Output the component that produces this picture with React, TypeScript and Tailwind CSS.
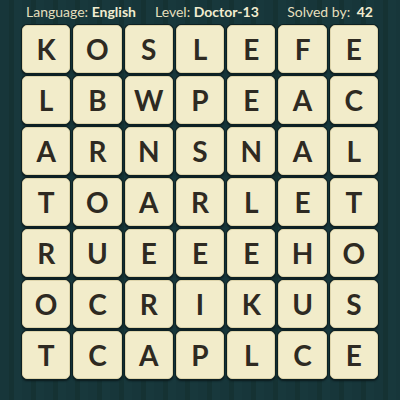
const rows = [
  "KOSLEFE",
  "LBWPEAC",
  "ARNSNAL",
  "TOARLET",
  "RUEEEHO",
  "OCRIKUS",
  "TCAPLCE",
];

export default function App() {
  return (
    <div className="w-[400px] h-[400px] overflow-hidden bg-[repeating-linear-gradient(90deg,#17363a_0px,#17363a_9px,#153233_9px,#153233_14px,#18383c_14px,#18383c_22px)] font-['Lato',sans-serif]">
      {/* Header */}
      <div className="flex items-center h-[23px] pl-[26px] pr-[27px] text-[14px] text-[#e4dfbd]">
        <div className="w-[129px]">
          Language: <span className="font-bold text-[#f1ecd0]">English</span>
        </div>
        <div>
          Level: <span className="font-bold text-[#f1ecd0]">Doctor-13</span>
        </div>
        <div className="ml-auto">
          Solved by: <span className="font-bold text-[#f1ecd0] ml-[3px]">42</span>
        </div>
      </div>

      {/* Board */}
      <div className="mt-[2px] ml-[22px] w-[356px] grid grid-cols-7 gap-[3px]">
        {rows.map((row, r) =>
          row.split("").map((ch, c) => (
            <div
              key={`${r}-${c}`}
              className="h-[48px] flex items-center justify-center rounded-[5px] bg-[#f2ecca] border border-[#ddd4ab] shadow-[0_0_0_1px_#0d2023,0_2px_2px_#0b1a1c] text-[28px] font-bold text-[#2e2a22] leading-none"
            >
              {ch}
            </div>
          ))
        )}
      </div>
    </div>
  );
}
